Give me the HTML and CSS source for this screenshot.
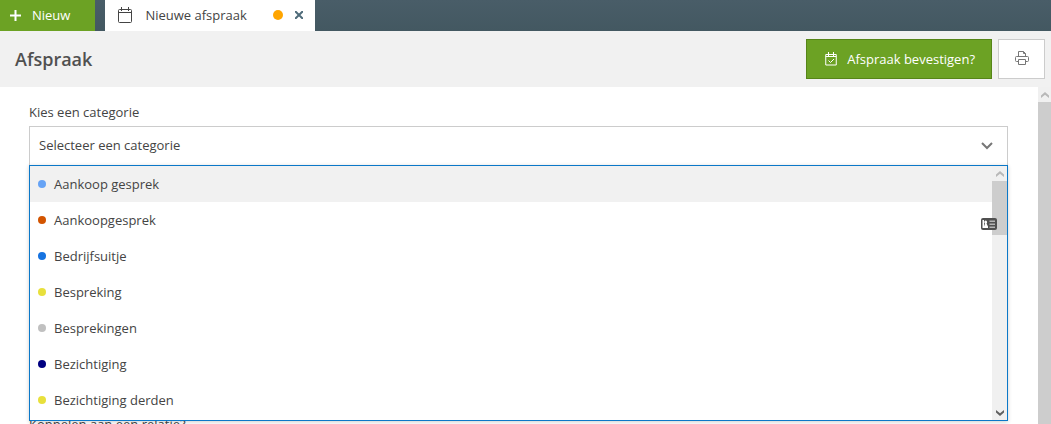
FILE: index.html
```html
<!DOCTYPE html>
<html lang="nl">
<head>
<meta charset="utf-8">
<meta name="viewport" content="width=device-width, initial-scale=1">
<title>Nieuwe afspraak</title>
<link rel="stylesheet" href="styles.css">
</head>
<body>
<div class="app">
  <nav class="topbar">
    <button class="new-button" type="button">
      <svg class="plus" viewBox="0 0 11 11" width="11" height="11" aria-hidden="true"><path d="M5.5 0v11M0 5.5h11"/></svg>
      <span>Nieuw</span>
    </button>
    <div class="tab">
      <svg class="tab-icon" viewBox="0 0 14 16" width="14" height="16" aria-hidden="true"><path d="M1.5 2.5h11a1 1 0 0 1 1 1v11a1 1 0 0 1-1 1h-11a1 1 0 0 1-1-1v-11a1 1 0 0 1 1-1zM.5 5.5h13M3.500 0v4M10.500 0v4"/></svg>
      <span class="tab-title">Nieuwe afspraak</span>
      <span class="tab-status"></span>
      <button class="tab-close" type="button" aria-label="Sluiten">
        <svg viewBox="0 0 8 8" width="8" height="8" aria-hidden="true"><path d="M0 0l8 8M8 0L0 8"/></svg>
      </button>
    </div>
  </nav>
  <header class="header">
    <h1 class="title">Afspraak</h1>
    <div class="actions">
      <button class="confirm" type="button">
        <svg viewBox="0 0 12 14" width="12" height="14" aria-hidden="true"><path d="M.75 2.500h10.500v10.500H.75zM.75 4.500h10.500M3.500 0v4M8.500 0v4M3.500 8.500l2 2 3.500-3.500"/></svg>
        <span>Afspraak bevestigen?</span>
      </button>
      <button class="print" type="button" aria-label="Afdrukken">
        <svg viewBox="0 0 14 14" width="14" height="14" aria-hidden="true"><path d="M3.500 5.500v-5h5l2 2v3M8.500.5v2h2M3.500 10.500h-2a1 1 0 0 1-1-1v-3a1 1 0 0 1 1-1h11a1 1 0 0 1 1 1v3a1 1 0 0 1-1 1h-2M3.500 8.500h7v5h-7z"/></svg>
      </button>
    </div>
  </header>
  <div class="body">
    <main class="form">
      <div class="field">
        <label class="label" for="category">Kies een categorie</label>
        <div class="picker">
          <select class="select" id="category">
            <option>Selecteer een categorie</option>
          </select>
          <svg class="select-arrow" viewBox="0 0 12 8" width="12" height="8" aria-hidden="true"><path d="M1 1l5 5 5-5"/></svg>
          <div class="menu">
            <ul class="options" role="listbox" aria-label="Kies een categorie">
              <li class="option active" role="option" aria-selected="true"><span class="dot sky"></span>Aankoop gesprek</li>
              <li class="option" role="option"><span class="dot rust"></span>Aankoopgesprek</li>
              <li class="option" role="option"><span class="dot blue"></span>Bedrijfsuitje</li>
              <li class="option" role="option"><span class="dot yellow"></span>Bespreking</li>
              <li class="option" role="option"><span class="dot grey"></span>Besprekingen</li>
              <li class="option" role="option"><span class="dot navy"></span>Bezichtiging</li>
              <li class="option" role="option"><span class="dot yellow"></span>Bezichtiging derden</li>
            </ul>
            <div class="scrollbar menu-scroll" aria-hidden="true">
              <span class="scroll-arrow faded"><svg viewBox="0 0 8 6" width="8" height="6"><path d="M0 6V3.500L4 0l4 3.500V6L4 2.800z"/></svg></span>
              <span class="thumb"></span>
              <span class="scroll-arrow last"><svg viewBox="0 0 8 6" width="8" height="6"><path d="M0 0v2.500L4 6l4-3.500V0L4 3.200z"/></svg></span>
            </div>
            <svg class="card-icon" viewBox="0 0 16 12" width="16" height="12" aria-hidden="true">
              <rect class="card-frame" x="0" y="0" width="16" height="12" rx="2"/>
              <path class="card-paper" d="M1.500 2h1.500v8H1.500zM4.500 2.500a1.700 1.700 0 0 1 1 3L7 8.500V10H3V8.500l1-3a1.700 1.700 0 0 1 .5-3z"/>
              <path class="card-lines" d="M8.500 2.500H14v1.500H8.500zM8.500 5.500H14v1.500H8.500zM8.500 8.500H14v1.500H8.500z"/>
            </svg>
          </div>
        </div>
      </div>
      <div class="field relation">
        <span class="label">Koppelen aan een relatie?</span>
      </div>
    </main>
    <div class="scrollbar page-scroll" aria-hidden="true">
      <span class="scroll-arrow faded"><svg viewBox="0 0 8 6" width="8" height="6"><path d="M0 6V3.500L4 0l4 3.500V6L4 2.800z"/></svg></span>
      <span class="thumb"></span>
    </div>
  </div>
</div>
</body>
</html>
```

FILE: styles.css
```css
* {
  box-sizing: border-box;
}

body {
  margin: 0;
  font: 13px/20px "Open Sans", "Noto Sans", sans-serif;
  color: #444;
  background: #fff;
}

button,
select {
  font: inherit;
  border-radius: 0;
  cursor: pointer;
}

svg {
  display: block;
  flex: none;
  fill: none;
  stroke: currentColor;
}

.app {
  display: flex;
  flex-direction: column;
  height: 100vh;
  overflow: hidden;
}

.topbar {
  display: flex;
  flex: none;
  gap: 10px;
  height: 31px;
  background: linear-gradient(#495d68, #435861);
}

.new-button {
  display: flex;
  align-items: center;
  gap: 11px;
  padding: 0 25px 1px 10px;
  border: 0;
  color: #fff;
  background: #6ca224;
  font-weight: 500;
}

.plus {
  stroke-width: 2;
}

.tab {
  display: flex;
  align-items: center;
  width: 210px;
  padding: 0 12px 1px 13px;
  background: #fff;
}

.tab-title {
  flex: 1;
  padding-left: 13px;
}

.tab-status {
  width: 10px;
  height: 10px;
  border-radius: 50%;
  background: #ffa500;
}

.tab-close {
  margin-left: 12px;
  padding: 0;
  border: 0;
  color: #4f6b7a;
  background: none;
}

.tab-close svg {
  stroke-width: 2;
}

.header {
  display: flex;
  flex: none;
  align-items: center;
  justify-content: space-between;
  padding: 8px 6px 8px 15px;
  background: #f1f1f1;
}

.title {
  margin: 0;
  font-size: 18px;
  line-height: 24px;
  font-weight: 600;
  color: #505050;
}

.actions {
  display: flex;
  gap: 6px;
}

.confirm,
.print {
  display: flex;
  align-items: center;
  height: 40px;
}

.confirm {
  gap: 10px;
  padding: 0 16px 0 18px;
  border: 1px solid #568518;
  color: #fff;
  background: #6ca224;
  font-weight: 500;
}

.print {
  justify-content: center;
  width: 47px;
  padding: 0 0 2px;
  border: 1px solid #ccc;
  color: #777;
  background: #fff;
}

.body {
  display: flex;
  flex: 1;
  min-height: 0;
}

.form {
  flex: 1;
  padding: 15px 30px 0 29px;
}

.label {
  display: block;
}

.picker {
  position: relative;
  display: grid;
  align-items: center;
  margin-top: 4px;
}

.select {
  grid-area: 1 / 1;
  width: 100%;
  height: 40px;
  padding: 0 40px 2px 9px;
  border: 1px solid #ccc;
  color: inherit;
  background: #fff;
  appearance: none;
}

.select-arrow {
  grid-area: 1 / 1;
  justify-self: end;
  margin-right: 15px;
  color: #777;
  stroke-width: 2;
  pointer-events: none;
}

.menu {
  position: absolute;
  top: 39px;
  left: 0;
  right: 0;
  display: flex;
  height: 256px;
  border: 1px solid #0b78c8;
  background: #fff;
  box-shadow: 0 1px 4px rgba(0, 0, 0, 0.2);
}

.options {
  flex: 1;
  margin: 0;
  padding: 0;
  list-style: none;
}

.option {
  display: flex;
  align-items: center;
  gap: 8px;
  height: 36px;
  padding-left: 8px;
}

.option.active {
  background: #f1f1f1;
}

.dot {
  width: 8px;
  height: 8px;
  border-radius: 50%;
}

.sky { background: #66a3f5; }
.rust { background: #d35400; }
.blue { background: #1673e0; }
.yellow { background: #e8e03c; }
.grey { background: #c0c0c0; }
.navy { background: #000080; }

.scrollbar {
  display: flex;
  flex: none;
  flex-direction: column;
  background: #f0f0f0;
}

.menu-scroll {
  width: 15px;
}

.page-scroll {
  width: 13px;
}

.scroll-arrow {
  display: flex;
  flex: none;
  align-items: center;
  justify-content: center;
  height: 15px;
  color: #606060;
}

.scroll-arrow svg {
  fill: currentColor;
  stroke: none;
}

.faded {
  color: #b8b8b8;
}

.last {
  margin-top: auto;
}

.thumb {
  background: #cdcdcd;
}

.menu-scroll .thumb {
  height: 54px;
}

.page-scroll .thumb {
  flex: 1;
}

.card-icon {
  position: absolute;
  top: 52px;
  right: 10px;
  stroke: none;
}

.card-frame {
  fill: #505050;
}

.card-paper {
  fill: #fff;
}

.card-lines {
  fill: #b4b4b4;
}

.relation {
  margin-top: 248px;
}
```
